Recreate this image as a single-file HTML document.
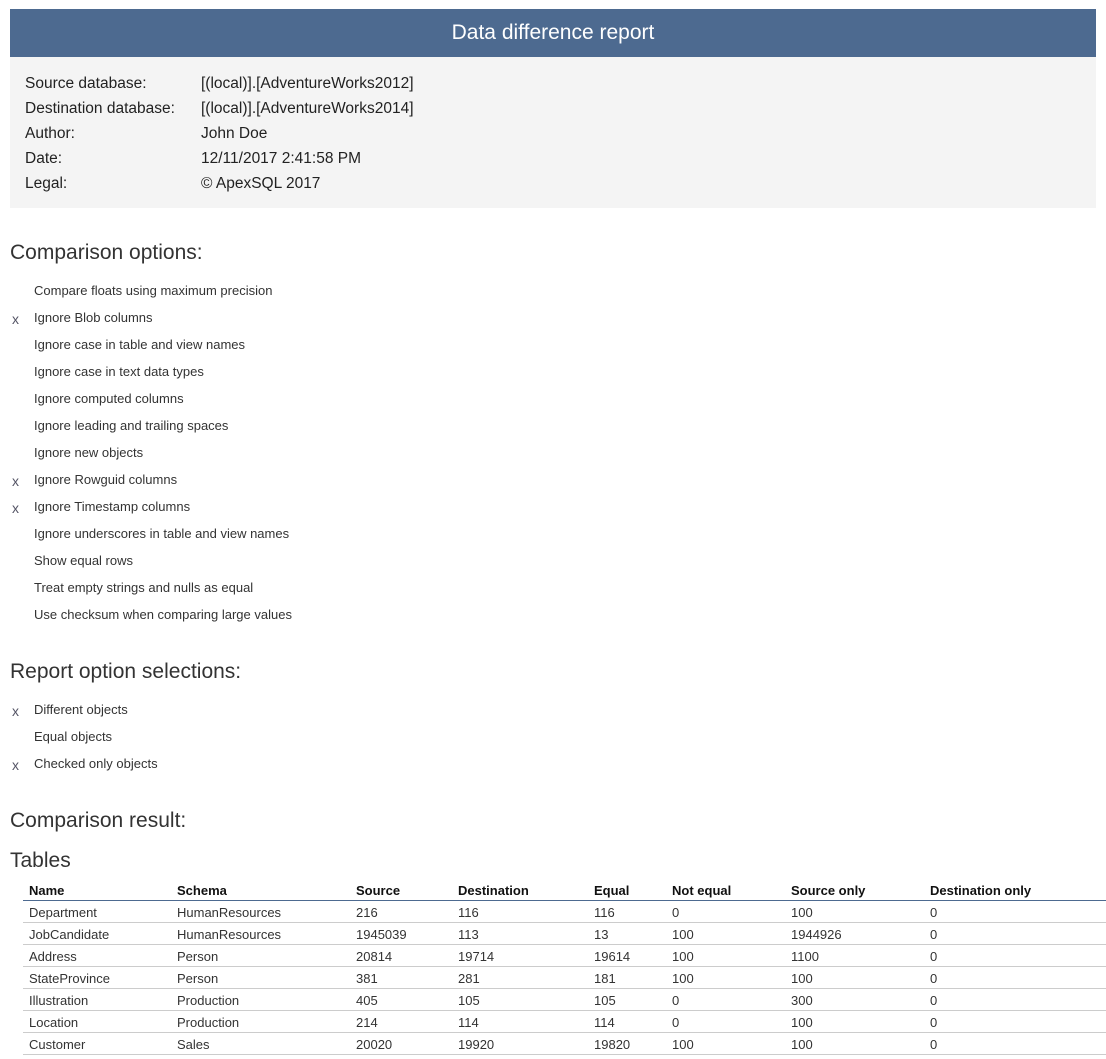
<!DOCTYPE html>
<html><head><meta charset="utf-8"><style>
*{margin:0;padding:0;box-sizing:border-box}
body{width:1106px;height:1059px;background:#fff;font-family:"Liberation Sans",sans-serif;color:#222;position:relative;overflow:hidden}
.a{position:absolute;white-space:nowrap}
#hdr{left:10px;top:9px;width:1086px;height:48px;background:#4d6a90;color:#fff;font-size:21px;line-height:48px;text-align:center}
#info{left:10px;top:57px;width:1086px;height:151px;background:#f4f4f4}
.il{font-size:15.5px;line-height:20px;color:#222}
.h{font-size:21px;line-height:26px;color:#333}
.o{font-size:13px;line-height:18px;color:#333}
.x{font-size:14px;line-height:18px;color:#556}
.th{font-size:13px;font-weight:bold;line-height:18px;color:#111}
.td{font-size:13px;line-height:18px;color:#333}
.ln{position:absolute;left:23px;width:1083px;height:1px;background:#ccc}
</style></head><body>
<div class="a" id="hdr">Data difference report</div>
<div class="a" id="info"></div>
<div class="a il" style="left:25px;top:74px">Source database:</div><div class="a il" style="left:201px;top:74px">[(local)].[AdventureWorks2012]</div>
<div class="a il" style="left:25px;top:99px">Destination database:</div><div class="a il" style="left:201px;top:99px">[(local)].[AdventureWorks2014]</div>
<div class="a il" style="left:25px;top:124px">Author:</div><div class="a il" style="left:201px;top:124px">John Doe</div>
<div class="a il" style="left:25px;top:149px">Date:</div><div class="a il" style="left:201px;top:149px">12/11/2017 2:41:58 PM</div>
<div class="a il" style="left:25px;top:174px">Legal:</div><div class="a il" style="left:201px;top:174px">© ApexSQL 2017</div>

<div class="a h" style="left:10px;top:240px">Comparison options:</div>
<div class="a o" style="left:34px;top:282px">Compare floats using maximum precision</div>
<div class="a x" style="left:12px;top:310px">x</div><div class="a o" style="left:34px;top:309px">Ignore Blob columns</div>
<div class="a o" style="left:34px;top:336px">Ignore case in table and view names</div>
<div class="a o" style="left:34px;top:363px">Ignore case in text data types</div>
<div class="a o" style="left:34px;top:390px">Ignore computed columns</div>
<div class="a o" style="left:34px;top:417px">Ignore leading and trailing spaces</div>
<div class="a o" style="left:34px;top:444px">Ignore new objects</div>
<div class="a x" style="left:12px;top:472px">x</div><div class="a o" style="left:34px;top:471px">Ignore Rowguid columns</div>
<div class="a x" style="left:12px;top:499px">x</div><div class="a o" style="left:34px;top:498px">Ignore Timestamp columns</div>
<div class="a o" style="left:34px;top:525px">Ignore underscores in table and view names</div>
<div class="a o" style="left:34px;top:552px">Show equal rows</div>
<div class="a o" style="left:34px;top:579px">Treat empty strings and nulls as equal</div>
<div class="a o" style="left:34px;top:606px">Use checksum when comparing large values</div>

<div class="a h" style="left:10px;top:659px">Report option selections:</div>
<div class="a x" style="left:12px;top:702px">x</div><div class="a o" style="left:34px;top:701px">Different objects</div>
<div class="a o" style="left:34px;top:728px">Equal objects</div>
<div class="a x" style="left:12px;top:756px">x</div><div class="a o" style="left:34px;top:755px">Checked only objects</div>

<div class="a h" style="left:10px;top:808px">Comparison result:</div>
<div class="a h" style="left:10px;top:848px">Tables</div>

<div class="a th" style="left:29px;top:882px">Name</div>
<div class="a th" style="left:177px;top:882px">Schema</div>
<div class="a th" style="left:356px;top:882px">Source</div>
<div class="a th" style="left:458px;top:882px">Destination</div>
<div class="a th" style="left:594px;top:882px">Equal</div>
<div class="a th" style="left:672px;top:882px">Not equal</div>
<div class="a th" style="left:791px;top:882px">Source only</div>
<div class="a th" style="left:930px;top:882px">Destination only</div>
<div class="ln" style="top:900px;background:#4d6a90"></div>

<div class="a td" style="left:29px;top:904px">Department</div><div class="a td" style="left:177px;top:904px">HumanResources</div><div class="a td" style="left:356px;top:904px">216</div><div class="a td" style="left:458px;top:904px">116</div><div class="a td" style="left:594px;top:904px">116</div><div class="a td" style="left:672px;top:904px">0</div><div class="a td" style="left:791px;top:904px">100</div><div class="a td" style="left:930px;top:904px">0</div>
<div class="ln" style="top:922px"></div>
<div class="a td" style="left:29px;top:926px">JobCandidate</div><div class="a td" style="left:177px;top:926px">HumanResources</div><div class="a td" style="left:356px;top:926px">1945039</div><div class="a td" style="left:458px;top:926px">113</div><div class="a td" style="left:594px;top:926px">13</div><div class="a td" style="left:672px;top:926px">100</div><div class="a td" style="left:791px;top:926px">1944926</div><div class="a td" style="left:930px;top:926px">0</div>
<div class="ln" style="top:944px"></div>
<div class="a td" style="left:29px;top:948px">Address</div><div class="a td" style="left:177px;top:948px">Person</div><div class="a td" style="left:356px;top:948px">20814</div><div class="a td" style="left:458px;top:948px">19714</div><div class="a td" style="left:594px;top:948px">19614</div><div class="a td" style="left:672px;top:948px">100</div><div class="a td" style="left:791px;top:948px">1100</div><div class="a td" style="left:930px;top:948px">0</div>
<div class="ln" style="top:966px"></div>
<div class="a td" style="left:29px;top:970px">StateProvince</div><div class="a td" style="left:177px;top:970px">Person</div><div class="a td" style="left:356px;top:970px">381</div><div class="a td" style="left:458px;top:970px">281</div><div class="a td" style="left:594px;top:970px">181</div><div class="a td" style="left:672px;top:970px">100</div><div class="a td" style="left:791px;top:970px">100</div><div class="a td" style="left:930px;top:970px">0</div>
<div class="ln" style="top:988px"></div>
<div class="a td" style="left:29px;top:992px">Illustration</div><div class="a td" style="left:177px;top:992px">Production</div><div class="a td" style="left:356px;top:992px">405</div><div class="a td" style="left:458px;top:992px">105</div><div class="a td" style="left:594px;top:992px">105</div><div class="a td" style="left:672px;top:992px">0</div><div class="a td" style="left:791px;top:992px">300</div><div class="a td" style="left:930px;top:992px">0</div>
<div class="ln" style="top:1010px"></div>
<div class="a td" style="left:29px;top:1014px">Location</div><div class="a td" style="left:177px;top:1014px">Production</div><div class="a td" style="left:356px;top:1014px">214</div><div class="a td" style="left:458px;top:1014px">114</div><div class="a td" style="left:594px;top:1014px">114</div><div class="a td" style="left:672px;top:1014px">0</div><div class="a td" style="left:791px;top:1014px">100</div><div class="a td" style="left:930px;top:1014px">0</div>
<div class="ln" style="top:1032px"></div>
<div class="a td" style="left:29px;top:1036px">Customer</div><div class="a td" style="left:177px;top:1036px">Sales</div><div class="a td" style="left:356px;top:1036px">20020</div><div class="a td" style="left:458px;top:1036px">19920</div><div class="a td" style="left:594px;top:1036px">19820</div><div class="a td" style="left:672px;top:1036px">100</div><div class="a td" style="left:791px;top:1036px">100</div><div class="a td" style="left:930px;top:1036px">0</div>
<div class="ln" style="top:1054px"></div>
</body></html>
